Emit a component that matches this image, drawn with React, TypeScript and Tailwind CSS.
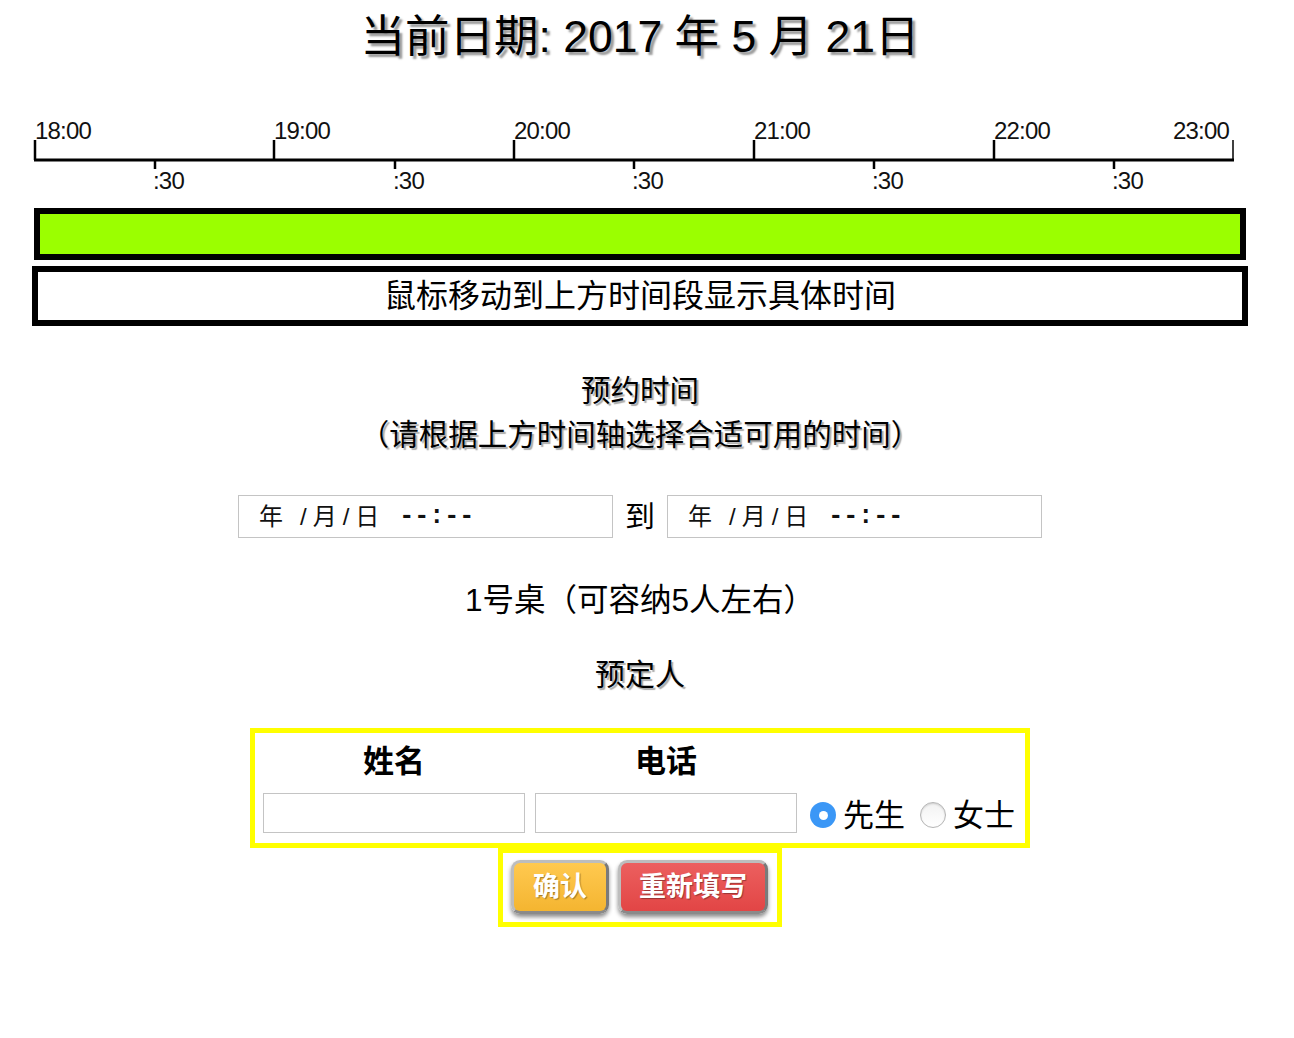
import React from "react";

const FONT = '"Liberation Sans", "Noto Sans CJK SC", sans-serif';

function Timeline() {
  const majors = [3, 242, 482, 722, 962];
  const labels = ["18:00", "19:00", "20:00", "21:00", "22:00"];
  const minors = [123, 363, 602, 842, 1082];
  return (
    <svg width="1216" height="100" viewBox="0 0 1216 100" className="block">
      <line x1="2" y1="60" x2="1202" y2="60" stroke="#000" strokeWidth="3" />
      {majors.map((x) => (
        <line key={x} x1={x} y1="40" x2={x} y2="60" stroke="#000" strokeWidth="2.5" />
      ))}
      <line x1="1201" y1="40" x2="1201" y2="60" stroke="#000" strokeWidth="1.5" />
      {minors.map((x) => (
        <line key={x} x1={x} y1="60" x2={x} y2="69" stroke="#000" strokeWidth="2.5" />
      ))}
      {labels.map((t, i) => (
        <text key={t} x={majors[i]} y="39" fontSize="24" fontFamily={FONT} letterSpacing="-0.8" fill="#111">
          {t}
        </text>
      ))}
      <text x="1197" y="39" fontSize="24" fontFamily={FONT} letterSpacing="-0.8" textAnchor="end" fill="#111">
        23:00
      </text>
      {minors.map((x) => (
        <text key={x} x={x - 2} y="89" fontSize="24" fontFamily={FONT} letterSpacing="-0.8" fill="#111">
          :30
        </text>
      ))}
    </svg>
  );
}

function DateBox() {
  return (
    <div className="w-[375px] h-[43px] border border-[#c4c4c4] flex items-center pl-[20px] text-[24px] leading-none text-[#111]">
      <span>年</span>
      <span className="ml-[17px]">/</span>
      <span className="ml-[6px]">月</span>
      <span className="ml-[6px]">/</span>
      <span className="ml-[6px]">日</span>
      <span className="ml-[20px] font-['Liberation_Mono'] font-bold text-[25px]">--:--</span>
    </div>
  );
}

function Radio({ checked }: { checked: boolean }) {
  return checked ? (
    <span className="w-[26px] h-[26px] rounded-full bg-[#3b97f6] flex items-center justify-center">
      <span className="w-[9px] h-[9px] rounded-full bg-white" />
    </span>
  ) : (
    <span className="w-[26px] h-[26px] rounded-full border border-[#b5b5b5] bg-gradient-to-b from-[#f2f2f2] to-white shadow-[inset_0_1px_2px_rgba(0,0,0,0.15)]" />
  );
}

export default function App() {
  return (
    <div className="w-[1280px] flex flex-col items-center text-black bg-white" style={{ fontFamily: FONT }}>
      <h1 className="mt-[7px] text-[44.5px] leading-[60px] [text-shadow:3px_3px_2px_#9a9a9a]">
        当前日期: 2017 年 5 月 21日
      </h1>

      <div className="mt-[33px] w-[1216px]">
        <Timeline />
      </div>

      <div className="mt-[8px] w-[1212px] h-[52px] border-[6px] border-black bg-[#9bff00]" />
      <div className="mt-[6px] w-[1216px] h-[60px] border-[6px] border-black flex items-center justify-center text-[32px] leading-none">
        鼠标移动到上方时间段显示具体时间
      </div>

      <div className="mt-[43px] text-[29.5px] leading-[44px] text-center [text-shadow:2px_2px_1px_#aaa]">
        <div>预约时间</div>
        <div>（请根据上方时间轴选择合适可用的时间）</div>
      </div>

      <div className="mt-[38px] flex items-center">
        <DateBox />
        <span className="mx-[12px] text-[30px] leading-none">到</span>
        <DateBox />
      </div>

      <div className="mt-[40px] text-[31.5px] leading-[44px]">1号桌（可容纳5人左右）</div>

      <div className="mt-[31px] text-[30px] leading-[44px] [text-shadow:2px_2px_1px_#aaa]">预定人</div>

      <div className="mt-[31px] w-[780px] border-[5px] border-[#ffff00] pl-[8px] pt-[7px] pb-[10px]">
        <div className="grid grid-cols-[262px_262px_auto] gap-x-[10px]">
          <div className="text-center text-[31px] font-bold leading-[44px]">姓名</div>
          <div className="text-center text-[31px] font-bold leading-[44px]">电话</div>
          <div />
          <input className="mt-[9px] h-[40px] border border-[#c4c4c4] outline-none" />
          <input className="mt-[9px] h-[40px] border border-[#c4c4c4] outline-none" />
          <div className="mt-[13px] flex items-center pl-[3px] text-[31px] leading-none">
            <Radio checked />
            <span className="ml-[7px]">先生</span>
            <span className="ml-[15px] flex"><Radio checked={false} /></span>
            <span className="ml-[7px]">女士</span>
          </div>
        </div>
      </div>

      <div className="w-[284px] border-[5px] border-[#ffff00] flex items-start pl-[8px] pt-[7px] pb-[8px] gap-[9px]">
        <button className="h-[54px] px-[19px] rounded-[9px] border-[3px] border-[#bdbdbd] border-r-[#7a7a7a] border-b-[#8a8a8a] bg-gradient-to-b from-[#ffc94f] to-[#f4b530] text-white font-bold text-[27px] leading-none shadow-[0_3px_4px_rgba(0,0,0,0.45)] [text-shadow:1px_1px_1px_rgba(0,0,0,0.35)]">
          确认
        </button>
        <button className="h-[54px] px-[18px] rounded-[9px] border-[3px] border-[#bdbdbd] border-r-[#7a7a7a] border-b-[#8a8a8a] bg-gradient-to-b from-[#ec5f5f] to-[#e24545] text-white font-bold text-[27px] leading-none shadow-[0_3px_4px_rgba(0,0,0,0.45)] [text-shadow:1px_1px_1px_rgba(0,0,0,0.35)]">
          重新填写
        </button>
      </div>
      <div className="h-[110px]" />
    </div>
  );
}
